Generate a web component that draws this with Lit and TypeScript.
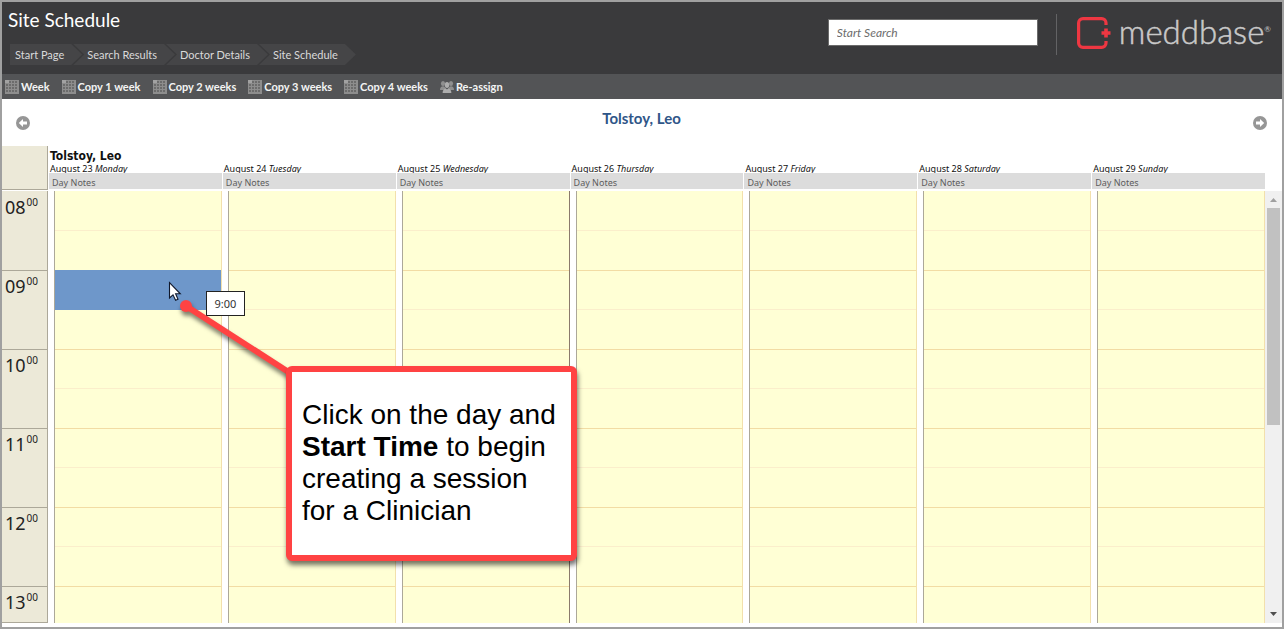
import { LitElement, html, css, svg } from "lit";
import { customElement, state } from "lit/decorators.js";
import { classMap } from "lit/directives/class-map.js";

const CRUMBS = ["Start Page", "Search Results", "Doctor Details", "Site Schedule"];
const ACTIONS = ["Week", "Copy 1 week", "Copy 2 weeks", "Copy 3 weeks", "Copy 4 weeks"];
const DAYS = [
  ["August 23", "Monday"],
  ["August 24", "Tuesday"],
  ["August 25", "Wednesday"],
  ["August 26", "Thursday"],
  ["August 27", "Friday"],
  ["August 28", "Saturday"],
  ["August 29", "Sunday"],
];
const HOURS = ["08", "09", "10", "11", "12", "13"];
const HALVES = ["00", "30"];

const gridIcon = html`<svg class="icon" width="14" height="14" viewBox="0 0 14 14" aria-hidden="true">
  <rect width="14" height="14" fill="#8d8d8d" />
  <path d="M0 0H4V3H0Z" fill="#a2a2a2" />
  ${[1, 4, 7, 10].map((y) =>
    [1, 4, 7, 10].map((x) => (x === 1 && y === 1 ? svg`` : svg`<rect x=${x} y=${y} width="2" height="2" fill="#6c6c6c" />`))
  )}
</svg>`;

const peopleIcon = html`<svg class="icon" width="14" height="14" viewBox="0 0 14 14" aria-hidden="true">
  <g fill="#8f8f8f">
    <ellipse cx="3" cy="3.6" rx="2.1" ry="2.5" /><ellipse cx="11" cy="3.6" rx="2.1" ry="2.5" />
    <path d="M0 10C0 7.4 1.2 6.2 3 6.2S5.6 7.4 5.6 10ZM8.4 10C8.4 7.4 9.2 6.2 11 6.2S14 7.4 14 10Z" />
  </g>
  <g fill="#adadad">
    <ellipse cx="7" cy="5" rx="2.2" ry="2.9" />
    <path d="M2.6 13C2.6 10 4.4 8.8 5.6 8.3L7 9.6L8.4 8.3C9.6 8.8 11.4 10 11.4 13Z" />
  </g>
</svg>`;

const arrowIcon = (d: string) => html`<svg width="14" height="14" viewBox="0 0 14 14" aria-hidden="true">
  <circle cx="7" cy="7" r="7" fill="#969696" />
  <path d=${d} fill="#fff" />
</svg>`;

@customElement("site-header")
class SiteHeader extends LitElement {
  static styles = css`
    :host {
      display: flex;
      justify-content: space-between;
      align-items: flex-start;
      height: 72px;
      box-sizing: border-box;
      background: #3a3a3c;
      font-family: Lato, sans-serif;
      padding: 7px 11px 0 6px;
    }
    .title {
      margin: 0;
      color: #fff;
      font-size: 19px;
      line-height: 22px;
      font-weight: 400;
    }
    .crumbs {
      display: flex;
      list-style: none;
      margin: 13px 0 0 2px;
      padding: 0;
    }
    .crumb {
      margin-left: -9px;
      background: #454547;
      clip-path: polygon(0 0, calc(100% - 11px) 0, 100% 50%, calc(100% - 11px) 100%, 0 100%, 11px 50%);
    }
    .crumb:first-child {
      margin-left: 0;
      clip-path: polygon(0 0, calc(100% - 11px) 0, 100% 50%, calc(100% - 11px) 100%, 0 100%);
    }
    .link {
      display: block;
      padding: 0 18px 0 14px;
      color: #dadada;
      font-size: 11px;
      line-height: 21px;
      text-decoration: none;
      white-space: nowrap;
    }
    .crumb:first-child .link {
      padding-left: 5px;
    }
    .tools {
      display: flex;
      align-items: center;
      margin-top: 5px;
    }
    .search {
      width: 210px;
      height: 27px;
      box-sizing: border-box;
      border: 1px solid #6b6b6b;
      padding: 0 8px;
      background: #fff;
      font: italic 12px/24px Lato, sans-serif;
      margin-bottom: 4px;
    }
    .search::placeholder {
      color: #6d6d6d;
      opacity: 1;
    }
    .brand {
      display: flex;
      align-items: center;
      height: 41px;
      margin-left: 18px;
      padding-left: 20px;
      border-left: 1px solid #636365;
    }
    .mark {
      display: block;
      margin-bottom: 4px;
    }
    .name {
      margin-left: 8px;
      color: #c9c9c9;
      font-size: 33px;
      line-height: 36px;
      font-weight: 300;
      -webkit-text-stroke: 0.5px #c9c9c9;
      padding-bottom: 8px;
    }
    .reg {
      align-self: flex-start;
      color: #c4c4c4;
      font-size: 8px;
      line-height: 10px;
      margin-top: 10px;
    }
  `;
  render() {
    return html`
      <div>
        <h1 class="title">Site Schedule</h1>
        <nav aria-label="Breadcrumb">
          <ol class="crumbs">
            ${CRUMBS.map((c) => html`<li class="crumb"><a class="link" href="#">${c}</a></li>`)}
          </ol>
        </nav>
      </div>
      <div class="tools">
        <input class="search" type="search" aria-label="Start Search" placeholder="Start Search" />
        <div class="brand">
          <svg class="mark" width="34" height="32" viewBox="0 0 34 32" aria-hidden="true">
            <path
              d="M29 8V6A4.3 4.3 0 0 0 24.7 1.7H5.9A4.3 4.3 0 0 0 1.6 6V26A4.3 4.3 0 0 0 5.9 30.3H24.7A4.3 4.3 0 0 0 29 26V24"
              fill="none" stroke="#ee3742" stroke-width="3.2" />
            <path d="M29 11.5V20.5M24.5 16H33.5" stroke="#ee3742" stroke-width="3.6" />
          </svg>
          <span class="name">meddbase</span><span class="reg">®</span>
        </div>
      </div>
    `;
  }
}

@customElement("action-bar")
class ActionBar extends LitElement {
  static styles = css`
    :host {
      display: flex;
      align-items: center;
      gap: 12px;
      height: 25px;
      padding-left: 3px;
      background: #535456;
    }
    .action {
      display: flex;
      align-items: center;
      gap: 2px;
      border: 0;
      padding: 0;
      background: none;
      color: #f4f4f4;
      font: bold 11px/16px Lato, sans-serif;
      white-space: nowrap;
    }
    .icon {
      display: block;
    }
  `;
  render() {
    return html`
      ${ACTIONS.map((a) => html`<button class="action">${gridIcon}${a}</button>`)}
      <button class="action">${peopleIcon}Re-assign</button>
    `;
  }
}

@customElement("week-schedule")
class WeekSchedule extends LitElement {
  @state() private selected = "0-09-00";

  static styles = css`
    :host {
      flex: 1;
      min-height: 0;
      display: flex;
      flex-direction: column;
      font-family: "Noto Sans", sans-serif;
    }
    .head {
      display: flex;
      height: 44px;
      margin-bottom: 1px;
      padding-right: 17px;
    }
    .corner {
      flex: none;
      width: 46px;
      box-sizing: border-box;
      background: #ece9d8;
      border-right: 1px solid #aca899;
      border-bottom: 1px solid #aca899;
    }
    .days {
      flex: 1;
      display: grid;
      grid-template-columns: repeat(7, minmax(0, 1fr));
    }
    .day {
      display: flex;
      flex-direction: column;
      padding-left: 1px;
      white-space: nowrap;
    }
    .who {
      height: 16px;
      padding-left: 1px;
      color: #111;
      font: bold 12px/20px "DejaVu Sans Condensed", "DejaVu Sans", sans-serif;
    }
    .date {
      height: 11px;
      overflow: hidden;
      padding-left: 1px;
      color: #111;
      font-size: 9px;
      line-height: 13px;
    }
    .notes {
      border: 0;
      height: 16px;
      padding: 4px 0 0 3px;
      background: #dcdcdc;
      color: #5c5c5c;
      font: 9px/12px "Noto Sans", sans-serif;
      text-align: left;
    }
    .body {
      flex: 1;
      min-height: 0;
      display: flex;
      overflow: hidden;
    }
    .times {
      flex: none;
      width: 46px;
      box-sizing: border-box;
      background: #ece9d8;
      border-right: 1px solid #aca899;
      border-bottom: 1px solid #aca899;
      overflow: hidden;
    }
    .time {
      display: flex;
      height: 79px;
      box-sizing: border-box;
      padding: 2px 0 0 3px;
      border-top: 1px solid #aca899;
      color: #222;
      font-size: 18px;
      line-height: 26px;
    }
    .time:first-child {
      border-top-color: transparent;
    }
    .min {
      font-size: 10px;
      line-height: 16px;
      margin-left: 1px;
    }
    .column {
      box-sizing: border-box;
      margin-left: 6px;
      border-left: 1px solid #aca899;
      border-right: 1px solid #f2e0ac;
      background: #ffffd5;
      overflow: hidden;
    }
    .column.marked {
      border-right-color: #8b7a6c;
    }
    .slot {
      display: block;
      width: 100%;
      height: 39px;
      box-sizing: border-box;
      border: 0;
      border-top: 1px solid #f2dca4;
      padding: 0;
      background: none;
    }
    .slot.half {
      height: 40px;
      border-top-color: #fbeecb;
    }
    .slot:first-child {
      border-top-color: transparent;
    }
    .slot.selected {
      background: #6e97ca;
      border-top-color: #6e97ca;
    }
    .slot.selected + .half {
      border-top-color: #6e97ca;
    }
    .scroll {
      flex: none;
      display: flex;
      flex-direction: column;
      width: 17px;
      background: #f0f0f0;
    }
    .arrow {
      display: block;
      flex: none;
    }
    .track {
      flex: 1;
      padding: 0 2px;
    }
    .thumb {
      height: 54.5%;
      background: #c1c1c1;
    }
  `;
  render() {
    return html`
      <div class="head">
        <div class="corner"></div>
        <div class="days">
          ${DAYS.map(
            ([date, name], i) => html`<div class="day">
              <div class="who">${i === 0 ? "Tolstoy, Leo" : ""}</div>
              <div class="date">${date} <em>${name}</em></div>
              <button class="notes">Day Notes</button>
            </div>`
          )}
        </div>
      </div>
      <div class="body">
        <div class="times">
          ${HOURS.map((h) => html`<div class="time">${h}<span class="min">00</span></div>`)}
        </div>
        <div class="days">
          ${DAYS.map(
            ([date], d) => html`<div class=${classMap({ column: true, marked: d === 2 })}>
              ${HOURS.map((h) =>
                HALVES.map((m) => {
                  const id = `${d}-${h}-${m}`;
                  return html`<button
                    class=${classMap({ slot: true, half: m === "30", selected: id === this.selected })}
                    aria-label="${date} ${h}:${m}"
                    @click=${() => (this.selected = id)}
                  ></button>`;
                })
              )}
            </div>`
          )}
        </div>
        <div class="scroll" aria-hidden="true">
          <svg class="arrow" width="17" height="17"><path d="M5 11L8.5 7L12 11Z" fill="#a0a0a0" /></svg>
          <div class="track"><div class="thumb"></div></div>
          <svg class="arrow" width="17" height="17"><path d="M5 6L8.5 10L12 6Z" fill="#505050" /></svg>
        </div>
      </div>
    `;
  }
}

@customElement("app-root")
class AppRoot extends LitElement {
  static styles = css`
    :host {
      display: flex;
      flex-direction: column;
      position: relative;
      box-sizing: border-box;
      height: 100vh;
      border: 2px solid #a0a0a0;
      padding-bottom: 4px;
      background: #fff;
      overflow: hidden;
    }
    .pager {
      display: flex;
      justify-content: space-between;
      align-items: center;
      height: 47px;
      box-sizing: border-box;
      padding: 0 15px 0 14px;
    }
    .step {
      display: block;
      border: 0;
      padding: 0;
      background: none;
      height: 14px;
    }
    .clinician {
      margin: 0;
      padding-bottom: 10px;
      color: #2f5688;
      font: bold 15px/20px Lato, sans-serif;
    }
    .cursor {
      position: absolute;
      left: 166px;
      top: 279px;
    }
    .tip {
      position: absolute;
      left: 204px;
      top: 289px;
      box-sizing: border-box;
      width: 39px;
      border: 1px solid #222;
      background: #fff;
      color: #333;
      font: 11px/23px "Noto Sans", sans-serif;
      text-align: center;
    }
    .leader {
      position: absolute;
      left: 172px;
      top: 292px;
      filter: drop-shadow(1px 4px 2px rgba(0, 0, 0, 0.5));
    }
    .callout {
      position: absolute;
      left: 284px;
      top: 364px;
      width: 291px;
      box-sizing: border-box;
      margin: 0;
      padding: 27px 10px 28px;
      border: 6px solid #ff4343;
      border-radius: 6px;
      background: #fff;
      box-shadow: 1px 4px 5px rgba(0, 0, 0, 0.55);
      color: #000;
      font: 28px/32px "Liberation Sans", Arial, sans-serif;
    }
  `;
  render() {
    return html`
      <site-header></site-header>
      <action-bar></action-bar>
      <div class="pager">
        <button class="step" aria-label="Previous week">${arrowIcon("M2.8 7L7 3V5.4H11V8.6H7V11Z")}</button>
        <h2 class="clinician">Tolstoy, Leo</h2>
        <button class="step" aria-label="Next week">${arrowIcon("M11.2 7L7 3V5.4H3V8.6H7V11Z")}</button>
      </div>
      <week-schedule></week-schedule>
      <div class="tip" role="tooltip">9:00</div>
      <svg class="leader" width="124" height="86" viewBox="0 0 124 86" aria-hidden="true">
        <path d="M12 12L116 79" stroke="#ff4343" stroke-width="6" />
        <circle cx="12" cy="12" r="6" fill="#ff4343" />
      </svg>
      <svg class="cursor" width="14" height="21" viewBox="0 0 14 21" aria-hidden="true">
        <path d="M1.5 1.5V17L5 13.8L7.6 19.3L10 18.2L7.6 12.8H12.3Z" fill="#fff" stroke="#10182c" stroke-width="1.1" />
      </svg>
      <p class="callout">
        Click on the day and<br /><b>Start Time</b> to begin<br />creating a session<br />for a Clinician
      </p>
    `;
  }
}
